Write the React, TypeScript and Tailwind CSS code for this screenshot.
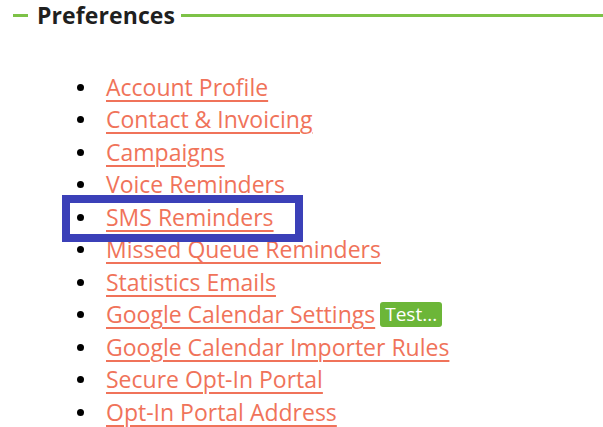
const links = [
  'Account Profile',
  'Contact & Invoicing',
  'Campaigns',
  'Voice Reminders',
  'SMS Reminders',
  'Missed Queue Reminders',
  'Statistics Emails',
  'Google Calendar Settings',
  'Google Calendar Importer Rules',
  'Secure Opt-In Portal',
  'Opt-In Portal Address',
];

export default function App() {
  return (
    <div className="relative w-[603px] h-[427px] overflow-hidden bg-white font-['Open_Sans',sans-serif]">
      {/* legend-style section header */}
      <div className="flex items-center h-[30px] pl-[13px]">
        <div className="w-[15px] h-[3px] bg-[#7dc247]" />
        <h2 className="ml-[9px] text-[23px] font-bold leading-none tracking-[0.1px] text-[#1f1f1f]">Preferences</h2>
        <div className="ml-[6px] flex-1 h-[3px] bg-[#7dc247]" />
      </div>

      <ul className="mt-[41px] pl-[77px]">
        {links.map((label) => (
          <li key={label} className="flex items-center h-[32.5px]">
            <span className="w-[7px] h-[7px] rounded-full bg-black" />
            <a
              href="#"
              className="ml-[22px] text-[23px] leading-none text-[#f0735a] underline decoration-[1.5px] underline-offset-[4px]"
            >
              {label}
            </a>
            {label === 'Google Calendar Settings' && (
              <span className="ml-[5px] px-[5px] h-[25px] flex items-center rounded-[3px] bg-[#6cb638] text-white text-[19px] leading-none">
                Test...
              </span>
            )}
          </li>
        ))}
      </ul>

      {/* highlight box around the SMS entry */}
      <div className="absolute left-[62px] top-[195px] w-[241px] h-[47px] border-[8px] border-[#3b40b8]" />
    </div>
  );
}
